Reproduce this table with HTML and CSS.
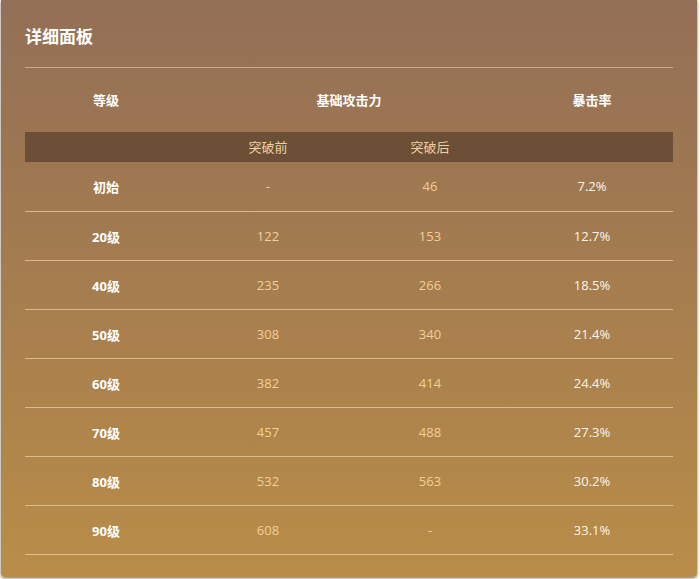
FILE: index.html
```html
<!DOCTYPE html>
<html lang="zh-CN">
<head>
    <meta charset="UTF-8">
    <meta name="viewport" content="width=device-width, initial-scale=1.0">
    <title>详细面板</title>
    <link rel="stylesheet" href="styles.css">
</head>
<body>
    <div class="panel">
        <h2 class="panel-title">详细面板</h2>

        <table class="stats-table">
            <thead>
                <tr class="head-row">
                    <th>等级</th>
                    <th colspan="2">基础攻击力</th>
                    <th>暴击率</th>
                </tr>
                <tr class="sub-row">
                    <th></th>
                    <th>突破前</th>
                    <th>突破后</th>
                    <th></th>
                </tr>
            </thead>
            <tbody>
                <tr class="first-row"><td class="level">初始</td><td class="val">-</td><td class="val">46</td><td class="rate">7.2%</td></tr>
                <tr><td class="level">20级</td><td class="val">122</td><td class="val">153</td><td class="rate">12.7%</td></tr>
                <tr><td class="level">40级</td><td class="val">235</td><td class="val">266</td><td class="rate">18.5%</td></tr>
                <tr><td class="level">50级</td><td class="val">308</td><td class="val">340</td><td class="rate">21.4%</td></tr>
                <tr><td class="level">60级</td><td class="val">382</td><td class="val">414</td><td class="rate">24.4%</td></tr>
                <tr><td class="level">70级</td><td class="val">457</td><td class="val">488</td><td class="rate">27.3%</td></tr>
                <tr><td class="level">80级</td><td class="val">532</td><td class="val">563</td><td class="rate">30.2%</td></tr>
                <tr><td class="level">90级</td><td class="val">608</td><td class="val">-</td><td class="rate">33.1%</td></tr>
            </tbody>
        </table>
    </div>
</body>
</html>
```

FILE: styles.css
```css
* {
    margin: 0;
    padding: 0;
    box-sizing: border-box;
}

body {
    font-family: "Open Sans", "Noto Sans CJK SC", "Noto Sans", sans-serif;
    background: #ffffff;
    padding: 0 3px 2px 1px;
}

.panel {
    width: 696px;
    height: 577px;
    background: linear-gradient(180deg, #936f56 0%, #a27a50 40%, #b98d48 100%);
    border-radius: 0 0 4px 4px;
    box-shadow: 0 1px 3px rgba(60, 40, 20, 0.7);
    padding: 25px 24px 0;
}

.panel-title {
    font-size: 17px;
    line-height: 24px;
    font-weight: 700;
    color: #ffffff;
    margin-bottom: 18px;
}

.stats-table {
    width: 648px;
    border-collapse: collapse;
    table-layout: fixed;
    border-top: 1px solid rgba(235, 210, 200, 0.6);
}

.stats-table th,
.stats-table td {
    text-align: center;
    font-size: 13px;
    padding: 0;
}

.head-row th {
    height: 64px;
    font-weight: 700;
    color: #ffffff;
}

.sub-row th {
    height: 30px;
    background: #6b4f37;
    font-weight: 400;
    color: #efcfa2;
}

.stats-table tbody td {
    height: 49px;
    border-bottom: 1px solid rgba(250, 225, 185, 0.6);
}

.stats-table .first-row td {
    height: 50px;
}

.level {
    font-weight: 700;
    color: #ffffff;
}

.val {
    color: #f2cf95;
}

.rate {
    color: #fff6e8;
}
```
